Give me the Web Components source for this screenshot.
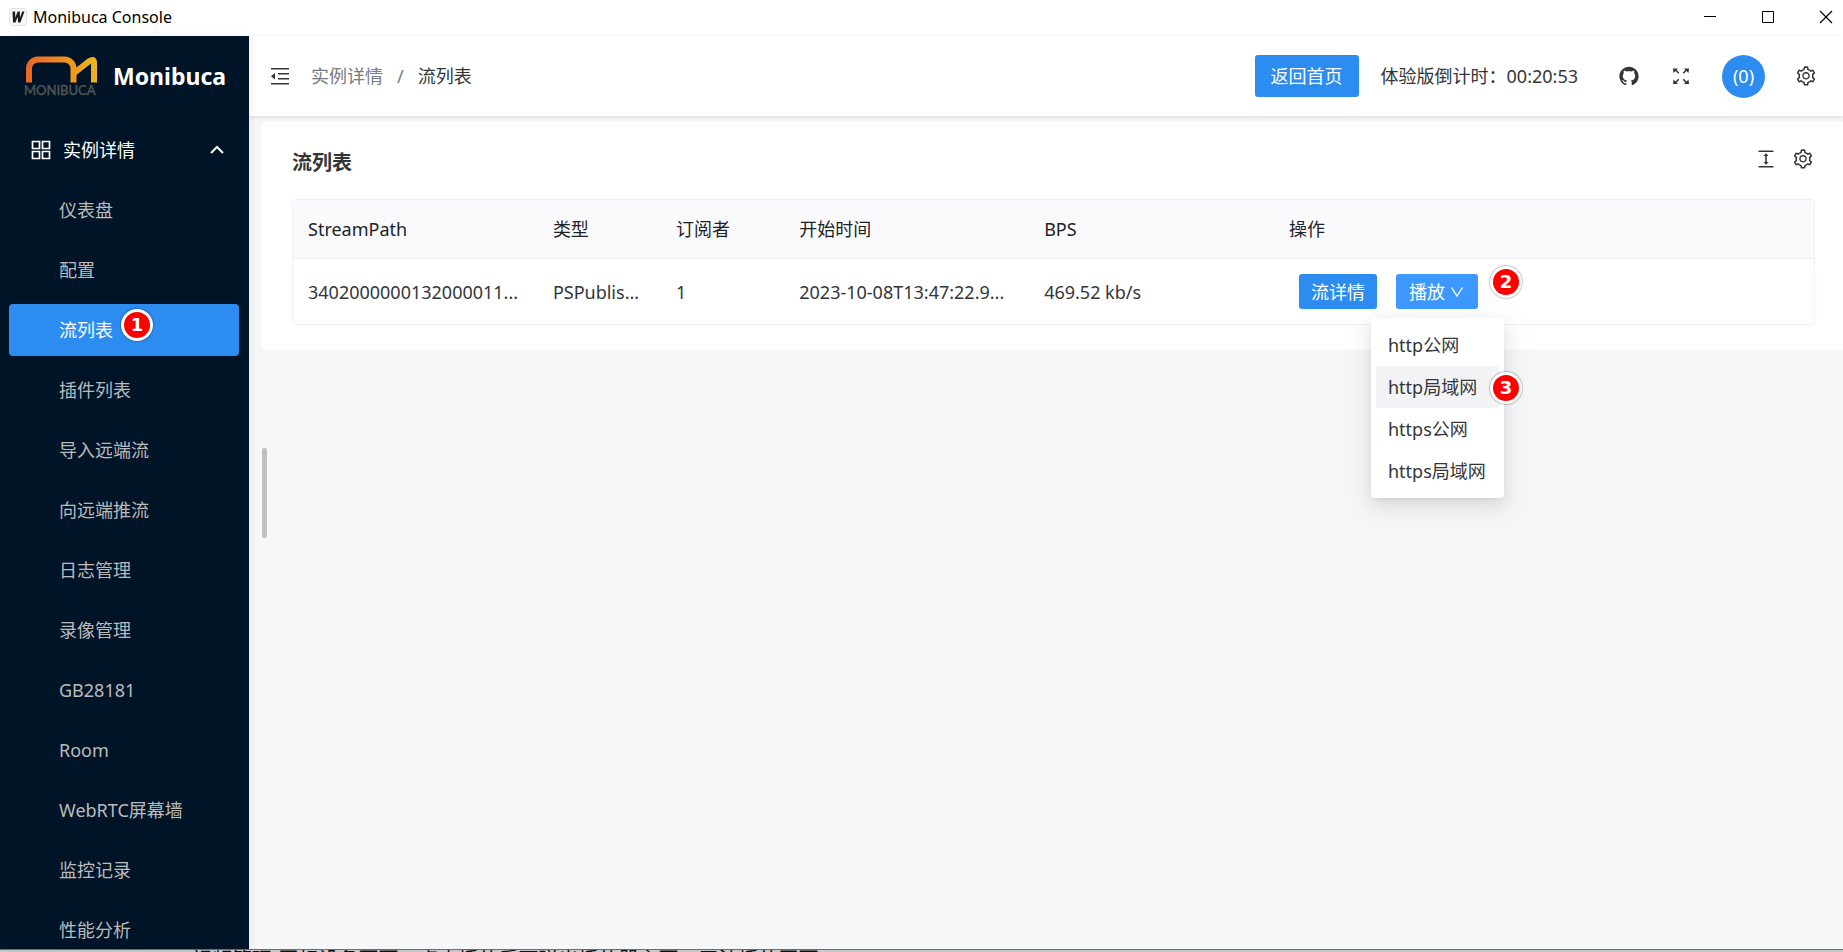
<!DOCTYPE html>
<html lang="zh-CN">
<head>
<meta charset="utf-8">
<title>Monibuca Console</title>
<style>
html, body { height: 100%; margin: 0; }
body {
  display: flex; flex-direction: column; overflow: hidden; background: #fff; color: #333639;
  font: 18px/28px "Noto Sans", "Noto Sans CJK SC", sans-serif;
}
.workspace { flex: 1; min-height: 0; display: flex; }
.page { flex: 1; min-width: 0; display: flex; flex-direction: column; background: #f5f7f9; }
</style>
</head>
<body>
<title-bar>Monibuca Console</title-bar>
<div class="workspace">
  <side-menu>
    <menu-item>仪表盘</menu-item>
    <menu-item>配置</menu-item>
    <menu-item active step="1">流列表</menu-item>
    <menu-item>插件列表</menu-item>
    <menu-item>导入远端流</menu-item>
    <menu-item>向远端推流</menu-item>
    <menu-item>日志管理</menu-item>
    <menu-item>录像管理</menu-item>
    <menu-item>GB28181</menu-item>
    <menu-item>Room</menu-item>
    <menu-item>WebRTC屏幕墙</menu-item>
    <menu-item>监控记录</menu-item>
    <menu-item>性能分析</menu-item>
  </side-menu>
  <div class="page">
    <top-bar></top-bar>
    <page-content><stream-list></stream-list></page-content>
  </div>
</div>
<desktop-strip>视频管理-国标设备页面，点击播放后可弹出播放器主页，无法播放画面</desktop-strip>

<script>
const define = (name, html, setup) => customElements.define(name, class extends HTMLElement {
  constructor() {
    super();
    this.attachShadow({ mode: 'open' }).innerHTML = html;
  }
  connectedCallback() { if (setup) setup(this, this.shadowRoot); }
});

const ICONS = {
  github: ['0 0 1024 1024', '<path d="M511.6 76.3C264.3 76.2 64 276.4 64 523.5 64 718.9 189.3 885 363.8 946c23.5 5.9 19.9-10.8 19.9-22.2v-77.5c-135.7 15.9-141.2-73.9-150.3-88.9C215 726 171.5 718 184.5 703c30.9-15.9 62.4 4 98.9 57.9 26.4 39.1 77.9 32.5 104 26 5.7-23.5 17.9-44.5 34.7-60.8-140.6-25.2-199.2-111-199.2-213 0-49.5 16.3-95 48.3-131.7-20.4-60.5 1.9-112.3 4.9-120 58.1-5.2 118.5 41.6 123.2 45.3 33-8.9 70.7-13.6 112.9-13.6 42.4 0 80.2 4.9 113.5 13.9 11.3-8.6 67.3-48.8 121.3-43.9 2.9 7.7 24.7 58.3 5.5 118 32.4 36.8 48.9 82.7 48.9 132.3 0 102.2-59 188.1-200 212.9a127.5 127.5 0 0138.1 91v112.5c.8 9 0 17.9 15 17.9 177.1-59.7 304.6-227 304.6-424.1 0-247.2-200.4-447.3-447.5-447.3z"/>'],
  setting: ['0 0 1024 1024', '<path d="M924.8 625.7l-65.5-56c3.1-19 4.7-38.4 4.7-57.8s-1.6-38.8-4.7-57.8l65.5-56a32.03 32.03 0 009.3-35.2l-.9-2.6a443.74 443.74 0 00-79.7-137.9l-1.8-2.1a32.12 32.12 0 00-35.1-9.5l-81.3 28.9c-30-24.6-63.5-44-99.7-57.6l-15.7-85a32.05 32.05 0 00-25.8-25.7l-2.7-.5c-52.1-9.4-106.9-9.4-159 0l-2.7.5a32.05 32.05 0 00-25.8 25.7l-15.8 85.4a351.86 351.86 0 00-99 57.4l-81.9-29.1a32 32 0 00-35.1 9.5l-1.8 2.1a446.02 446.02 0 00-79.7 137.9l-.9 2.6c-4.5 12.5-.8 26.5 9.3 35.2l66.3 56.6c-3.1 18.8-4.6 38-4.6 57.1 0 19.2 1.5 38.4 4.6 57.1L99 625.5a32.03 32.03 0 00-9.3 35.2l.9 2.6c18.1 50.4 44.9 96.9 79.7 137.9l1.8 2.1a32.12 32.12 0 0035.1 9.5l81.9-29.1c29.8 24.5 63.1 43.9 99 57.4l15.8 85.4a32.05 32.05 0 0025.8 25.7l2.7.5a449.4 449.4 0 00159 0l2.7-.5a32.05 32.05 0 0025.8-25.7l15.7-85a350 350 0 0099.7-57.6l81.3 28.9a32 32 0 0035.1-9.5l1.8-2.1c34.8-41.1 61.6-87.5 79.7-137.9l.9-2.6c4.5-12.3.8-26.3-9.3-35zM788.3 465.9c2.5 15.1 3.8 30.6 3.8 46.1s-1.3 31-3.8 46.1l-6.6 40.1 74.7 63.9a370.03 370.03 0 01-42.6 73.6L721 702.8l-31.4 25.8c-23.9 19.6-50.5 35-79.3 45.8l-38.1 14.3-17.9 97a377.5 377.5 0 01-85 0l-17.9-97.2-37.8-14.5c-28.5-10.8-55-26.2-78.7-45.7l-31.4-25.9-93.4 33.2c-17-22.9-31.2-47.6-42.6-73.6l75.5-64.5-6.5-40c-2.4-14.9-3.7-30.3-3.7-45.5 0-15.3 1.2-30.6 3.7-45.5l6.5-40-75.5-64.5c11.3-26.1 25.6-50.7 42.6-73.6l93.4 33.2 31.4-25.9c23.7-19.5 50.2-34.9 78.7-45.7l37.9-14.3 17.9-97.2c28.1-3.2 56.8-3.2 85 0l17.9 97 38.1 14.3c28.7 10.8 55.4 26.2 79.3 45.8l31.4 25.8 92.8-32.9c17 22.9 31.2 47.6 42.6 73.6L781.8 426l6.5 39.9zM512 326c-97.2 0-176 78.8-176 176s78.8 176 176 176 176-78.8 176-176-78.8-176-176-176zm79.2 255.2A111.6 111.6 0 01512 614c-29.9 0-58-11.7-79.2-32.8A111.6 111.6 0 01400 502c0-29.9 11.7-58 32.8-79.2C454 401.6 482.1 390 512 390c29.9 0 58 11.6 79.2 32.8A111.6 111.6 0 01624 502c0 29.9-11.7 58-32.8 79.2z"/>'],
  height: ['0 0 1024 1024', '<path d="M860 836H164v76h696zM860 112H164v76h696zM610.800 378c6 0 9.400-7 5.700-11.700L515.700 238.700a7.140 7.140 0 00-11.300 0L403.600 366.300a7.230 7.230 0 005.700 11.700H476v268h-62.800c-6 0-9.400 7-5.700 11.700l100.800 127.500c2.900 3.700 8.500 3.700 11.300 0l100.800-127.500c3.700-4.700.4-11.700-5.700-11.700H548V378h62.800z"/>'],
  full: ['0 0 22 22', '<path d="M3 3.500h5L6.600 5 9.300 7.700 8.200 8.800 5.500 6.100 3.500 8zM19 3.500h-5L15.400 5l-2.700 2.700 1.100 1.100 2.700-2.700L18.500 8zM3 19h5l-1.400-1.500 2.700-2.700-1.100-1.100-2.700 2.700L3.500 14.500zM19 19h-5l1.400-1.500-2.700-2.700 1.100-1.100 2.700 2.700 2-1.900z"/>'],
  fold: ['0 0 22 22', '<path d="M2 3h18v1.600H2zM9 8h11v1.600H9zM9 13h11v1.600H9zM2 18h18v1.600H2zM2 11.300L6 8v6.600z"/>'],
  grid: ['0 0 22 22', '<path fill="none" stroke="currentColor" stroke-width="1.700" d="M2.500 2.500h7v7h-7zM12.500 2.500h7v7h-7zM2.500 12.500h7v7h-7zM12.500 12.500h7v7h-7z"/>'],
  up: ['0 0 22 22', '<path fill="none" stroke="currentColor" stroke-width="2" d="M5 14l6-6 6 6"/>'],
  down: ['0 0 16 16', '<path fill="none" stroke="currentColor" stroke-width="1.300" d="M2.500 3.500L8 12l5.500-8.500"/>'],
  min: ['0 0 14 14', '<path d="M1 6h12v1H1z"/>'],
  max: ['0 0 14 14', '<path fill="none" stroke="currentColor" d="M1.500 1.500h11v11h-11z"/>'],
  close: ['0 0 14 14', '<path fill="none" stroke="currentColor" stroke-width="1.200" d="M1 1l12 12M13 1L1 13"/>'],
};
define('ui-icon', `<style>
  :host { display: block; width: var(--icon-size, 22px); height: var(--icon-size, 22px); flex: none; }
  svg { display: block; width: 100%; height: 100%; fill: currentColor; }
</style><svg aria-hidden="true"></svg>`, (el, root) => {
  const [box, body] = ICONS[el.getAttribute('name')];
  const svg = root.querySelector('svg');
  svg.setAttribute('viewBox', box);
  svg.innerHTML = body;
});

define('step-badge', `<style>
  :host { box-sizing: border-box; width: 32px; height: 32px; display: flex; align-items: center; justify-content: center;
    border: 3px solid #fff; border-radius: 50%; background: #fe0000; box-shadow: 0 0 1px 1px rgba(0,0,0,.22);
    color: #fff; font: bold 18px/26px "DejaVu Sans", sans-serif; }
</style><slot></slot>`);

define('title-bar', `<style>
  :host { height: 34px; flex: none; display: flex; align-items: center; padding: 0 10px 2px 9px; color: #000; background: #fff; }
  .fav { box-sizing: border-box; width: 18px; height: 18px; margin-right: 6px; border: 1px solid #e3e3e3; border-radius: 3px; background: #f8f8f8; }
  .name { flex: 1; font-size: 16px; line-height: 24px; }
  .ctl { display: flex; gap: 44px; --icon-size: 14px; }
  button { padding: 0; border: 0; background: none; color: inherit; }
</style>
<svg class="fav" viewBox="0 0 16 16" aria-hidden="true"><path d="M2.500 2.500h2.600l.2 6.300 2.300-6.300h2.200l.2 6.300 2.200-6.300h2.300L10.400 13.500H8l-.3-5.800-2.200 5.800H3z" fill="#1c1c1c"/></svg>
<span class="name"><slot></slot></span>
<div class="ctl"><button aria-label="最小化"><ui-icon name="min"></ui-icon></button><button aria-label="最大化"><ui-icon name="max"></ui-icon></button><button aria-label="关闭"><ui-icon name="close"></ui-icon></button></div>`);

define('side-menu', `<style>
  :host { width: 249px; flex: none; display: flex; flex-direction: column; overflow: hidden; background: #001428; color: #bbb;
    position: relative; z-index: 1; box-shadow: 2px 0 8px rgba(29,35,41,.06); }
  .brand { height: 80px; flex: none; display: flex; align-items: center; gap: 13px; padding: 0 24px; color: #fff; }
  .brand svg { width: 76px; height: 44px; flex: none; }
  .brand b { font-size: 23px; line-height: 32px; }
  nav { display: flex; flex-direction: column; gap: 8px; padding: 8px 10px 0 9px; }
  .group { height: 52px; flex: none; display: flex; align-items: center; gap: 11px; padding: 0 11px 0 21px;
    border: 0; background: none; color: #fff; font: inherit; text-align: left; }
  .group span { flex: 1; }
</style>
<div class="brand">
  <svg viewBox="0 0 76 44" aria-hidden="true">
    <defs><linearGradient id="g" gradientUnits="userSpaceOnUse" x1="2" y1="0" x2="73" y2="0"><stop offset="0" stop-color="#ee6423"/><stop offset="1" stop-color="#ecb51f"/></linearGradient></defs>
    <path d="M5 28.500V14.500a9 9 0 0 1 9-9h26.500a9 9 0 0 1 9 9V28.500M49.500 19.500L65.500 7Q70 4 70 9V28.500" fill="none" stroke="url(#g)" stroke-width="6"/>
    <text x="0" y="41" font-family="Lato, sans-serif" font-size="13" fill="#555" stroke="#555" stroke-width=".4">MONIBUCA</text>
  </svg><b>Monibuca</b>
</div>
<nav><button class="group"><ui-icon name="grid"></ui-icon><span>实例详情</span><ui-icon name="up"></ui-icon></button><slot></slot></nav>`);

define('menu-item', `<style>
  :host { display: block; flex: none; position: relative; }
  a { display: flex; align-items: center; height: 52px; padding-left: 50px; border-radius: 4px; color: inherit; text-decoration: none; }
  :host([active]) a { background: #2d8cf0; color: #fff; }
  step-badge { position: absolute; left: 112px; top: 5px; }
</style><a href="#"><slot></slot></a>`, (el, root) => {
  if (el.hasAttribute('step')) {
    const badge = document.createElement('step-badge');
    badge.textContent = el.getAttribute('step');
    root.append(badge);
  }
});

define('top-bar', `<style>
  :host { height: 80px; flex: none; display: flex; align-items: center; padding: 0 26px 0 20px; background: #fff;
    position: relative; box-shadow: 0 1px 4px rgba(0,21,41,.12); }
  button { padding: 0; border: 0; background: none; color: inherit; font: inherit; }
  nav { flex: 1; display: flex; align-items: center; margin-left: 20px; gap: 14px; }
  nav a { color: #767c82; text-decoration: none; }
  nav i { font-style: normal; color: #767c82; }
  .home { height: 42px; padding: 0 16px; border-radius: 3px; background: #2d8cf0; color: #fff; margin-right: 22px; }
  .tools { display: flex; align-items: center; gap: 30px; margin-left: 40px; }
  .user { width: 43px; height: 43px; border-radius: 50%; background: #2d8cf0; color: #fff; }
</style>
<button aria-label="折叠菜单"><ui-icon name="fold"></ui-icon></button>
<nav><a href="#">实例详情</a><i>/</i><span>流列表</span></nav>
<button class="home">返回首页</button>
<span>体验版倒计时：00:20:53</span>
<div class="tools">
  <button aria-label="GitHub"><ui-icon name="github"></ui-icon></button>
  <button aria-label="全屏"><ui-icon name="full"></ui-icon></button>
  <button class="user">(0)</button>
  <button aria-label="设置"><ui-icon name="setting"></ui-icon></button>
</div>`);

define('page-content', `<style>
  :host { flex: 1; min-height: 0; display: block; position: relative; padding: 6px 0 0 13px; }
  .thumb { position: absolute; left: 13px; top: 332px; width: 5px; height: 90px; border-radius: 2px; background: #c1c1c1; }
</style><slot></slot><div class="thumb"></div>`);

define('play-dropdown', `<style>
  :host { display: block; position: relative; }
  .play { display: flex; align-items: center; gap: 4px; height: 35px; padding: 0 13px; border: 0; border-radius: 3px;
    background: #3d99ff; color: #fff; font: inherit; --icon-size: 16px; }
  ul { position: absolute; left: -25px; top: 44px; box-sizing: border-box; width: 133px; margin: 0; padding: 6px 5px; list-style: none;
    border-radius: 4px; background: #fff;
    box-shadow: 0 3px 6px -4px rgba(0,0,0,.12), 0 6px 16px rgba(0,0,0,.08), 0 9px 28px 8px rgba(0,0,0,.05); }
  a { display: flex; align-items: center; height: 42px; padding-left: 12px; border-radius: 3px; color: #333639; text-decoration: none; white-space: nowrap; }
  .on { background: #f3f3f5; }
  step-badge { position: absolute; left: 94px; top: -8px; }
  step-badge + step-badge { top: 98px; }
</style>
<button class="play">播放<ui-icon name="down"></ui-icon></button>
<ul><li><a href="#">http公网</a></li><li><a class="on" href="#">http局域网</a></li><li><a href="#">https公网</a></li><li><a href="#">https局域网</a></li></ul>
<step-badge>2</step-badge><step-badge>3</step-badge>`);

define('stream-list', `<style>
  :host { display: block; padding: 19px 28px 25px 30px; border-radius: 4px 0 0 4px; background: #fff; }
  header { display: flex; align-items: flex-start; height: 58px; }
  h2 { flex: 1; margin: 8px 0 0; font-size: 20px; line-height: 28px; font-weight: bold; }
  .tools { display: flex; gap: 15px; margin: 7px 1px 0 0; }
  .tools button { padding: 0; border: 0; background: none; color: inherit; }
  .frame { border: 1px solid #efeff5; border-radius: 4px; }
  table { width: 100%; table-layout: fixed; border-collapse: separate; border-spacing: 0; }
  .wide { width: 16.1%; } .half { width: 8.1%; }
  th, td { box-sizing: border-box; padding: 0 15px; text-align: left; font-weight: normal; white-space: nowrap; }
  th { height: 59px; background: #fafafc; border-bottom: 1px solid #efeff5; color: #1f2225; }
  td { height: 65px; }
  td:not(.ops) { overflow: hidden; text-overflow: ellipsis; }
  .row { display: flex; gap: 19px; padding-left: 10px; }
  .detail { height: 35px; padding: 0 12px; border: 0; border-radius: 3px; background: #2d8cf0; color: #fff; font: inherit; }
</style>
<header><h2>流列表</h2><div class="tools"><button aria-label="密度"><ui-icon name="height"></ui-icon></button><button aria-label="列设置"><ui-icon name="setting"></ui-icon></button></div></header>
<div class="frame"><table>
  <colgroup><col class="wide"><col class="half"><col class="half"><col class="wide"><col class="wide"><col></colgroup>
  <thead><tr><th>StreamPath</th><th>类型</th><th>订阅者</th><th>开始时间</th><th>BPS</th><th>操作</th></tr></thead>
  <tbody><tr><td>3402000000132000011...</td><td>PSPublis...</td><td>1</td><td>2023-10-08T13:47:22.9...</td><td>469.52 kb/s</td>
  <td class="ops"><div class="row"><button class="detail">流详情</button><play-dropdown></play-dropdown></div></td></tr></tbody>
</table></div>`);

define('desktop-strip', `<style>
  :host { display: block; height: 2px; flex: none; overflow: hidden; padding-left: 192px; border-top: 1px solid #6d6d71;
    background: #c9c9cb; color: #111; font-size: 20px; line-height: 20px; white-space: nowrap; }
</style><slot></slot>`);
</script>
</body>
</html>
